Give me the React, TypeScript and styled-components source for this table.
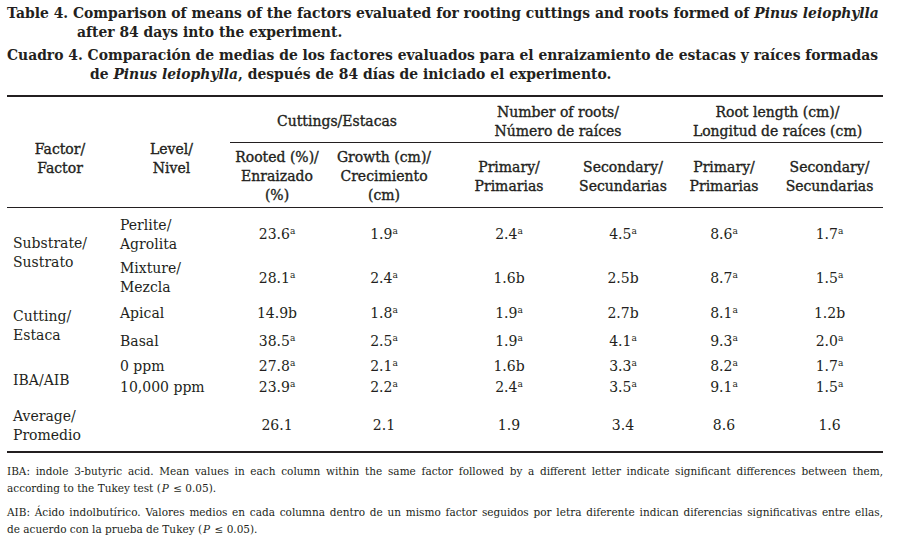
import styled, { createGlobalStyle } from "styled-components";

const GlobalStyle = createGlobalStyle`
  html, body {
    margin: 0;
    background: #fff;
  }
  body {
    font-family: "DejaVu Serif", "Liberation Serif", serif;
    color: #231f20;
  }
`;

const Page = styled.main`
  width: 876px;
  padding: 4px 17px 0 7px;
`;

const Caption = styled.p<{ $indent: number }>`
  margin: 0 0 4px;
  font-size: 13.9px;
  font-weight: bold;
  line-height: 19px;
  padding-left: ${(p) => p.$indent}px;
  text-indent: -${(p) => p.$indent}px;
`;

const Table = styled.table`
  width: 876px;
  margin-top: 11px;
  border-collapse: collapse;
  table-layout: fixed;
  border-top: 2px solid #231f20;
  border-bottom: 2px solid #231f20;
`;

const HeadRow = styled.tr<{ $h: number }>`
  height: ${(p) => p.$h}px;
`;

// cabeceras en semi-negrita: regular con un trazo fino
const Th = styled.th<{ $rule?: boolean; $pt?: number }>`
  padding: ${(p) => p.$pt ?? 0}px 0 0;
  font-size: 14px;
  font-weight: normal;
  line-height: 19px;
  text-align: center;
  vertical-align: middle;
  -webkit-text-stroke: 0.35px #231f20;
  border-bottom: ${(p) => (p.$rule ? "1px solid #231f20" : "none")};
`;

const Row = styled.tr<{ $h: number }>`
  height: ${(p) => p.$h}px;
`;

const Label = styled.td<{ $pl: number; $pt?: number; $pb?: number }>`
  padding: ${(p) => p.$pt ?? 0}px 0 ${(p) => p.$pb ?? 0}px ${(p) => p.$pl}px;
  font-size: 14px;
  line-height: 19px;
  text-align: left;
  vertical-align: middle;
`;

const Value = styled.td<{ $pt?: number; $pb?: number }>`
  padding: ${(p) => p.$pt ?? 0}px 0 ${(p) => p.$pb ?? 0}px;
  font-size: 14px;
  line-height: 19px;
  text-align: center;
  vertical-align: middle;
`;

const Sup = styled.sup`
  font-size: 9px;
  line-height: 0;
  vertical-align: 5px;
`;

const Notes = styled.section`
  margin-top: 10px;
`;

const Note = styled.p`
  margin: 0 0 7px;
  font-size: 10.5px;
  line-height: 17px;
  text-align: justify;
`;

const Em = styled.i`
  padding: 0 1px;
`;

const widths = [106, 117, 94, 120, 130, 98, 104, 107];

type BodyRow = { level: string[]; h: number; pt?: number; pb?: number; values: string[] };
type Group = { factor: string[]; pb?: number; rows: BodyRow[] };

const groups: Group[] = [
  {
    factor: ["Substrate/", "Sustrato"],
    rows: [
      { level: ["Perlite/", "Agrolita"], h: 51, pt: 4, values: ["23.6a", "1.9a", "2.4a", "4.5a", "8.6a", "1.7a"] },
      { level: ["Mixture/", "Mezcla"], h: 40, values: ["28.1a", "2.4a", "1.6b", "2.5b", "8.7a", "1.5a"] },
    ],
  },
  {
    factor: ["Cutting/", "Estaca"],
    rows: [
      { level: ["Apical"], h: 31, values: ["14.9b", "1.8a", "1.9a", "2.7b", "8.1a", "1.2b"] },
      { level: ["Basal"], h: 25, values: ["38.5a", "2.5a", "1.9a", "4.1a", "9.3a", "2.0a"] },
    ],
  },
  {
    factor: ["IBA/AIB"],
    rows: [
      { level: ["0 ppm"], h: 23, pt: 1, values: ["27.8a", "2.1a", "1.6b", "3.3a", "8.2a", "1.7a"] },
      { level: ["10,000 ppm"], h: 29, pb: 9, values: ["23.9a", "2.2a", "2.4a", "3.5a", "9.1a", "1.5a"] },
    ],
  },
  {
    factor: ["Average/", "Promedio"],
    pb: 6,
    rows: [{ level: [], h: 46, pb: 6, values: ["26.1", "2.1", "1.9", "3.4", "8.6", "1.6"] }],
  },
];

// "a" va como superíndice, "b" queda en línea
const renderValue = (v: string) =>
  v.endsWith("a") ? (
    <>
      {v.slice(0, -1)}
      <Sup>a</Sup>
    </>
  ) : (
    v
  );

const lines = (parts: string[]) =>
  parts.map((p, i) => (
    <span key={i}>
      {i > 0 && <br />}
      {p}
    </span>
  ));

export default function App() {
  return (
    <>
      <GlobalStyle />
      <Page>
        <Caption $indent={70}>
          Table 4. Comparison of means of the factors evaluated for rooting cuttings and roots formed of{" "}
          <i>Pinus leiophylla</i>
          <br />
          after 84 days into the experiment.
        </Caption>
        <Caption $indent={83}>
          Cuadro 4. Comparación de medias de los factores evaluados para el enraizamiento de estacas y raíces
          formadas
          <br />
          de <i>Pinus leiophylla</i>, después de 84 días de iniciado el experimento.
        </Caption>

        <Table>
          <colgroup>
            {widths.map((w, i) => (
              <col key={i} style={{ width: w }} />
            ))}
          </colgroup>
          <thead>
            <HeadRow $h={46}>
              <Th rowSpan={2} $rule $pt={15}>
                Factor/
                <br />
                Factor
              </Th>
              <Th rowSpan={2} $rule $pt={15}>
                Level/
                <br />
                Nivel
              </Th>
              <Th colSpan={2} $rule $pt={5}>
                Cuttings/Estacas
              </Th>
              <Th colSpan={2} $rule $pt={5}>
                Number of roots/
                <br />
                Número de raíces
              </Th>
              <Th colSpan={2} $rule $pt={5}>
                Root length (cm)/
                <br />
                Longitud de raíces (cm)
              </Th>
            </HeadRow>
            <HeadRow $h={65}>
              <Th $rule $pt={3}>
                Rooted (%)/
                <br />
                Enraizado
                <br />
                (%)
              </Th>
              <Th $rule $pt={3}>
                Growth (cm)/
                <br />
                Crecimiento
                <br />
                (cm)
              </Th>
              <Th $rule $pt={4}>
                Primary/
                <br />
                Primarias
              </Th>
              <Th $rule $pt={4}>
                Secondary/
                <br />
                Secundarias
              </Th>
              <Th $rule $pt={4}>
                Primary/
                <br />
                Primarias
              </Th>
              <Th $rule $pt={4}>
                Secondary/
                <br />
                Secundarias
              </Th>
            </HeadRow>
          </thead>
          <tbody>
            {groups.map((g) =>
              g.rows.map((r, i) => (
                <Row key={g.factor[0] + i} $h={r.h}>
                  {i === 0 && (
                    <Label rowSpan={g.rows.length} $pl={6} $pb={g.pb}>
                      {lines(g.factor)}
                    </Label>
                  )}
                  <Label $pl={7} $pt={r.pt} $pb={r.pb}>
                    {lines(r.level)}
                  </Label>
                  {r.values.map((v, j) => (
                    <Value key={j} $pt={r.pt} $pb={r.pb}>
                      {renderValue(v)}
                    </Value>
                  ))}
                </Row>
              ))
            )}
          </tbody>
        </Table>

        <Notes>
          <Note>
            IBA: indole 3-butyric acid. Mean values in each column within the same factor followed by a different
            letter indicate significant differences between them, according to the Tukey test (<Em>P</Em> ≤ 0.05).
          </Note>
          <Note>
            AIB: Ácido indolbutírico. Valores medios en cada columna dentro de un mismo factor seguidos por letra
            diferente indican diferencias significativas entre ellas, de{"\u00a0"}acuerdo con la prueba de Tukey (
            <Em>P</Em> ≤ 0.05).
          </Note>
        </Notes>
      </Page>
    </>
  );
}
